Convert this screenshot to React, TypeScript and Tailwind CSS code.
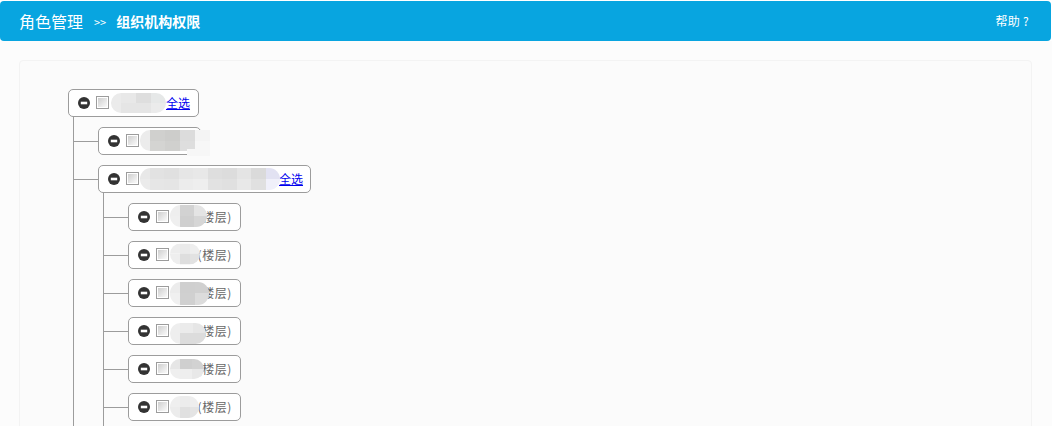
import { type ReactNode } from "react";

interface MosaicProps {
  className: string;
  rows: string[][];
}

// pixelated privacy patch; first cell of a row may carry its own width
function Mosaic({ className, rows }: MosaicProps) {
  return (
    <div className={`relative z-10 flex shrink-0 flex-col overflow-hidden ${className}`}>
      {rows.map((row, i) => (
        <div key={i} className="flex flex-1">
          {row.map((cell, j) => (
            <div key={j} className={`flex-1 ${cell}`} />
          ))}
        </div>
      ))}
    </div>
  );
}

function Collapse() {
  return (
    <svg className="h-3 w-3 shrink-0" viewBox="0 0 12 12">
      <circle cx="6" cy="6" r="6" fill="#333333" />
      <rect x="2.8" y="4.7" width="6.4" height="2.6" fill="#ffffff" />
    </svg>
  );
}

function Check() {
  return (
    <span className="ml-[6px] flex h-[13px] w-[13px] shrink-0 -translate-y-[1px] border border-[#9c9c9c] bg-white p-px">
      <span className="h-full w-full bg-gradient-to-br from-[#cfcfcf] to-[#fafafa]" />
    </span>
  );
}

interface NodeProps {
  className?: string;
  children: ReactNode;
}

function Node({ className = "", children }: NodeProps) {
  return (
    <div className={`relative flex h-[28px] shrink-0 items-center rounded-[5px] border border-[#9c9c9c] bg-white pl-[9px] text-xs ${className}`}>
      <Collapse />
      <Check />
      {children}
    </div>
  );
}

function Branch({ children }: { children: ReactNode }) {
  return (
    <li className="flex items-center">
      <span className="h-px w-[24px] shrink-0 bg-[#9c9c9c]" />
      {children}
    </li>
  );
}

const floors: { mosaic: string; rows: string[][] }[] = [
  {
    mosaic: "h-[22px] w-[37px] -mr-[37px] -translate-y-px rounded-[11px]",
    rows: [["w-[10px] flex-none bg-[#eeeeee]", "bg-[#d2d2d2]", "bg-[#e4e4e4]"], ["w-[10px] flex-none bg-[#efefef]", "bg-[#cfcfcf]", "bg-[#d6d6d6]"]],
  },
  {
    mosaic: "h-[21px] w-[30px] -mr-[30px] -translate-y-[1.5px] rounded-[11px]",
    rows: [["w-[10px] flex-none bg-[#ededed]", "bg-[#eaeaea]", "bg-[#eeeeee]"], ["w-[10px] flex-none bg-[#eeeeee]", "bg-[#dedede]", "bg-[#e2e2e2]"]],
  },
  {
    mosaic: "h-[23px] w-[39px] -mr-[39px] rounded-[11px]",
    rows: [["w-[10px] flex-none bg-[#ececec]", "bg-[#cfcfcf]", "bg-[#d0d0d0]"], ["w-[10px] flex-none bg-[#f0f0f0]", "bg-[#d0d0d0]", "bg-[#dcdcdc]"]],
  },
  {
    mosaic: "h-[21px] w-[36px] -mr-[36px] translate-y-[2px] rounded-[11px]",
    rows: [["w-[10px] flex-none bg-[#eeeeee]", "bg-[#ebebeb]", "bg-[#e6e6e6]"], ["w-[10px] flex-none bg-[#eeeeee]", "bg-[#dcdcdc]", "bg-[#dcdcdc]"]],
  },
  {
    mosaic: "h-[20px] w-[34px] -mr-[34px] rounded-[10px]",
    rows: [["w-[10px] flex-none bg-[#e6e6e6]", "bg-[#cfcfcf]", "bg-[#d2d2d2]"], ["w-[10px] flex-none bg-[#efefef]", "bg-[#eeeeee]", "bg-[#e8e8e8]"]],
  },
  {
    mosaic: "h-[22px] w-[29px] -mr-[29px] rounded-[11px]",
    rows: [["w-[10px] flex-none bg-[#efefef]", "bg-[#ececec]", "bg-[#eeeeee]"], ["w-[10px] flex-none bg-[#ececec]", "bg-[#e0e0e0]", "bg-[#e4e4e4]"]],
  },
];

function SelectAll() {
  return <a className="shrink-0 text-[#0000ee] underline">全选</a>;
}

export default function App() {
  return (
    <div className="h-[426px] overflow-hidden bg-white pt-px font-['Microsoft_YaHei','Noto_Sans_CJK_SC',sans-serif] text-[#555555]">
      <header className="mr-px flex h-10 items-center justify-between rounded-[4px] bg-[#08a5e0] pl-[19px] pr-[22px] text-white">
        <div className="flex items-center">
          <span className="text-base">角色管理</span>
          <span className="ml-[11px] mt-[3px] text-[11px]">&gt;&gt;</span>
          <span className="ml-[10px] text-sm font-bold">组织机构权限</span>
        </div>
        <span className="whitespace-pre text-xs tracking-[0.3px]">帮助 ?</span>
      </header>

      <main className="h-full bg-[#fcfcfc] pl-[19px] pr-5 pt-[19px]">
        <section className="h-[400px] rounded-[4px] border border-[#f3f3f3] bg-[#fbfbfb] pl-[48px] pt-[28px]">
          <Node className="w-[131px]">
            <Mosaic
              className="ml-[2px] h-[20px] w-[55px] rounded-[10px]"
              rows={[["w-[10px] flex-none bg-[#ebebeb]", "bg-[#e8e8e8]", "bg-[#dedede]", "bg-[#e6e8e8]"], ["w-[10px] flex-none bg-[#ebebeb]", "bg-[#e5e5e5]", "bg-[#e5e5e5]", "bg-[#ebebeb]"]]}
            />
            <SelectAll />
          </Node>

          <ul className="ml-[5px] flex flex-col gap-[10px] border-l border-[#9c9c9c] pt-[10px]">
            <Branch>
              <Node className="w-[103px]">
                <Mosaic
                  className="ml-px -mt-px h-[21px] w-[70px] shrink-0 rounded-l-[10px]"
                  rows={[["w-[10px] flex-none bg-[#ececec]", "bg-[#d0d0ce]", "bg-[#cdcdcb]", "bg-[#dcdcdc]", "bg-[#f4f4f4]"], ["w-[10px] flex-none bg-[#ececec]", "bg-[#d4d4d2]", "bg-[#d0d0ce]", "bg-[#dedede]", "bg-[#f7f7f7]"]]}
                />
                <span className="absolute left-[88px] top-[21px] z-10 h-[7px] w-[23px] bg-[#f7f7f7]" />
              </Node>
            </Branch>
            <li className="flex flex-col">
              <div className="flex items-center">
                <span className="h-px w-[24px] shrink-0 bg-[#9c9c9c]" />
                <Node className="w-[213px]">
                  <Mosaic
                    className="ml-px h-[22px] w-[140px] rounded-[11px]"
                    rows={[
                      ["w-[10px] flex-none bg-[#e8e8e8]", "bg-[#e2e2e2]", "bg-[#e0e0e0]", "bg-[#e6e6e6]", "bg-[#e8e8e8]", "bg-[#dedede]", "bg-[#dcdcdc]", "bg-[#e4e4e4]", "bg-[#dadada]", "bg-[#e2e2f2]"],
                      ["w-[10px] flex-none bg-[#ebebeb]", "bg-[#e6e6e6]", "bg-[#e5e5e5]", "bg-[#ececec]", "bg-[#eeeeee]", "bg-[#e2e2e2]", "bg-[#e0e0e0]", "bg-[#e8e8e8]", "bg-[#e0e0e0]", "bg-[#f0f0fa]"],
                    ]}
                  />
                  <span className="-ml-px">
                    <SelectAll />
                  </span>
                </Node>
              </div>
              <ul className="ml-[29px] flex flex-col gap-[10px] border-l border-[#9c9c9c] pb-[60px] pt-[10px]">
                {floors.map((floor, i) => (
                  <Branch key={i}>
                    <Node className="w-[113px]">
                      <span className="w-px shrink-0" />
                      <Mosaic className={floor.mosaic} rows={floor.rows} />
                      <span className="ml-auto whitespace-nowrap pr-2 tracking-[0.6px] text-[#666666]">(楼层)</span>
                    </Node>
                  </Branch>
                ))}
              </ul>
            </li>
          </ul>
        </section>
      </main>
    </div>
  );
}
